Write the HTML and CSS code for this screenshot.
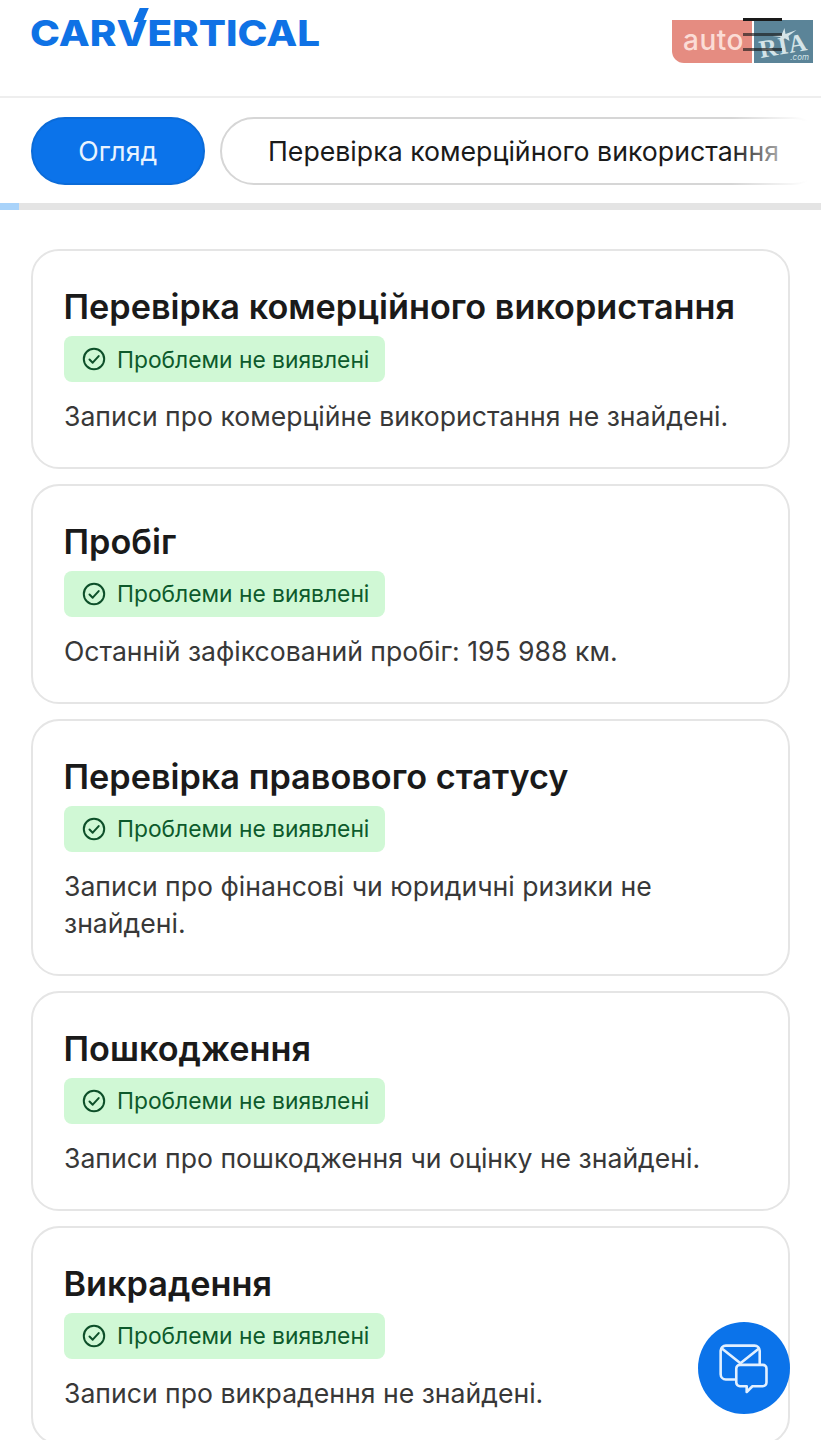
FILE: index.html
```html
<!DOCTYPE html>
<html lang="uk">
<head>
<meta charset="utf-8">
<title>carVertical</title>
<link rel="stylesheet" href="styles.css">
</head>
<body>
<div class="page">
  <header class="header">
    <div class="logo"><span>CAR</span><span class="logo-v">V</span><span>ERTICAL</span></div>
    <div class="ria">
      <div class="ria-left">auto</div>
      <div class="ria-right">
        <svg class="ria-star" viewBox="0 0 24 14"><path d="M0 9l9-1 3-7 1 6 11-4-8 6 1 5-5-3-5 3 1-4z" fill="#d5e4e8"/></svg>
        <span class="ria-name">RIA</span>
        <span class="ria-com">.com</span>
      </div>
    </div>
    <div class="menu"><i></i><i></i><i></i></div>
  </header>
  <nav class="tabs">
    <a class="tab tab-active">Огляд</a>
    <a class="tab">Перевірка комерційного використання</a>
    <div class="tabs-fade"></div>
  </nav>
  <div class="progress"><div class="progress-fill"></div></div>
  <main class="cards">
    <section class="card">
      <h2 class="card-title">Перевірка комерційного використання</h2>
      <div class="badge"><svg class="badge-icon" viewBox="0 0 24 24"><circle cx="12" cy="12" r="10.2"/><path d="M7.5 12.5l3.2 3.2 6-6.6"/></svg>Проблеми не виявлені</div>
      <p class="card-text">Записи про комерційне використання не знайдені.</p>
    </section>
    <section class="card">
      <h2 class="card-title">Пробіг</h2>
      <div class="badge"><svg class="badge-icon" viewBox="0 0 24 24"><circle cx="12" cy="12" r="10.2"/><path d="M7.5 12.5l3.2 3.2 6-6.6"/></svg>Проблеми не виявлені</div>
      <p class="card-text">Останній зафіксований пробіг: 195 988 км.</p>
    </section>
    <section class="card">
      <h2 class="card-title">Перевірка правового статусу</h2>
      <div class="badge"><svg class="badge-icon" viewBox="0 0 24 24"><circle cx="12" cy="12" r="10.2"/><path d="M7.5 12.5l3.2 3.2 6-6.6"/></svg>Проблеми не виявлені</div>
      <p class="card-text">Записи про фінансові чи юридичні ризики не знайдені.</p>
    </section>
    <section class="card">
      <h2 class="card-title">Пошкодження</h2>
      <div class="badge"><svg class="badge-icon" viewBox="0 0 24 24"><circle cx="12" cy="12" r="10.2"/><path d="M7.5 12.5l3.2 3.2 6-6.6"/></svg>Проблеми не виявлені</div>
      <p class="card-text">Записи про пошкодження чи оцінку не знайдені.</p>
    </section>
    <section class="card">
      <h2 class="card-title">Викрадення</h2>
      <div class="badge"><svg class="badge-icon" viewBox="0 0 24 24"><circle cx="12" cy="12" r="10.2"/><path d="M7.5 12.5l3.2 3.2 6-6.6"/></svg>Проблеми не виявлені</div>
      <p class="card-text">Записи про викрадення не знайдені.</p>
    </section>
  </main>
  <button class="chat" aria-label="Чат">
    <svg viewBox="0 0 48 48" class="chat-icon">
      <path d="M17 35H8.5A5 5 0 0 1 3.500 30V7.500A5 5 0 0 1 8.500 2.500H36A5 5 0 0 1 41 7.500V20"/>
      <path d="M5 5.500L22.500 19.500L40 5.500"/>
      <path d="M22 24H44a3.500 3.500 0 0 1 3.500 3.500V41a3.500 3.500 0 0 1-3.500 3.500H34L28.500 50V44.500H22a3.500 3.500 0 0 1-3.500-3.500V27.500A3.500 3.500 0 0 1 22 24Z" transform="translate(0 -3)"/>
    </svg>
  </button>
</div>
</body>
</html>
```
FILE: styles.css
```css
* { box-sizing: border-box; }
html, body { margin: 0; padding: 0; background: #fff; }
body { font-family: Inter, "Noto Sans", sans-serif; }
.page { position: relative; width: 821px; height: 1440px; overflow: hidden; }

.header { position: relative; height: 98px; border-bottom: 2px solid #eeeeee; padding: 14px 0 0 30px; }
.logo { display: flex; align-items: flex-end; width: max-content; height: 40px; font-size: 35.500px; line-height: 40px; font-weight: 800; color: #0f72e5; transform: scaleX(1.135); transform-origin: left center; }
.logo-v { position: relative; }
.logo-v::after { content: ""; position: absolute; left: 18px; top: -6px; width: 7.500px; height: 14px; background: #0f72e5; transform: skewX(-21deg); }
.menu { position: absolute; left: 743px; top: 18px; display: flex; flex-direction: column; gap: 12px; width: 39px; }
.menu i { display: block; height: 3px; background: #1a1a1a; }
.menu i + i { opacity: .65; }
.ria { position: absolute; left: 672px; top: 20px; display: flex; gap: 2px; width: 141px; height: 43px; }
.ria-left { width: 80px; background: #e58c81; border-bottom-left-radius: 12px; color: #fbdcd6; font-size: 28px; font-weight: 500; line-height: 40px; padding-left: 11px; letter-spacing: .5px; }
.ria-right { position: relative; flex: 1; background: #5b8498; color: #d5e4e8; }
.ria-star { position: absolute; left: 18px; top: 7px; width: 25px; height: 14px; }
.ria-name { position: absolute; left: 5px; top: 13px; font-family: "Liberation Serif", serif; font-weight: 700; font-size: 25px; line-height: 26px; letter-spacing: 1px; transform: rotate(-10deg); }
.ria-com { position: absolute; right: 4px; bottom: 1px; font-size: 8px; font-style: italic; }

.tabs { position: relative; display: flex; gap: 15.500px; height: 105px; padding: 19px 0 0 31px; overflow: hidden; }
.tab { flex: none; height: 68px; padding: 0 46px; display: flex; align-items: center; border: 2px solid #d6d6d6; border-radius: 34px; font-size: 26.700px; color: #1a1a1a; background: #fff; }
.tab-active { width: 173.500px; padding: 0; justify-content: center; background: #0b73ea; border-color: #0b6bd8; color: #e8f3ff; }
.tabs-fade { position: absolute; right: 0; top: 0; bottom: 0; width: 90px; background: linear-gradient(to right, rgba(255,255,255,0), #fff 85%); }

.progress { height: 7px; background: #e4e4e4; }
.progress-fill { width: 19px; height: 100%; background: #a9d3fa; }

.cards { display: flex; flex-direction: column; gap: 15px; padding: 39px 31px 0; }
.card { flex: none; border: 2px solid #e5e5e5; border-radius: 28px; padding: 34px 31px 31.250px; background: #fff; }
.card-title { margin: 0 0 7px -0.500px; font-size: 34.250px; line-height: 44px; font-weight: 600; color: #1a1a1a; white-space: nowrap; }
.badge { display: flex; align-items: center; width: 321px; height: 46px; padding-left: 18px; gap: 11px; background: #d0f8d5; border-radius: 8px; color: #0d5a2c; font-size: 22.800px; white-space: nowrap; }
.badge-icon { width: 24px; height: 24px; fill: none; stroke: #0d4f29; stroke-width: 2; stroke-linecap: round; stroke-linejoin: round; flex: none; }
.card-text { margin: 16px 0 0; font-size: 26.600px; line-height: 37.500px; color: #383838; }

.chat { position: absolute; left: 698px; top: 1322px; width: 92px; height: 92px; border: 0; border-radius: 50%; padding: 0 4px 0 0; background: #0b73ea; display: flex; align-items: center; justify-content: center; }
.chat-icon { width: 50px; height: 52px; fill: none; stroke: #e3f0ff; stroke-width: 2.500; stroke-linecap: round; stroke-linejoin: round; overflow: visible; }
```
